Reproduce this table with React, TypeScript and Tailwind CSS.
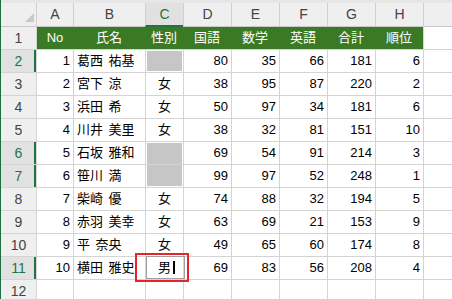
import React from "react";

type Row = {
  no: number;
  name: string;
  sex: string | null;
  d: number;
  e: number;
  f: number;
  g: number;
  h: number;
};

const rows: Row[] = [
  { no: 1, name: "葛西 祐基", sex: null, d: 80, e: 35, f: 66, g: 181, h: 6 },
  { no: 2, name: "宮下 涼", sex: "女", d: 38, e: 95, f: 87, g: 220, h: 2 },
  { no: 3, name: "浜田 希", sex: "女", d: 50, e: 97, f: 34, g: 181, h: 6 },
  { no: 4, name: "川井 美里", sex: "女", d: 38, e: 32, f: 81, g: 151, h: 10 },
  { no: 5, name: "石坂 雅和", sex: null, d: 69, e: 54, f: 91, g: 214, h: 3 },
  { no: 6, name: "笹川 満", sex: null, d: 99, e: 97, f: 52, g: 248, h: 1 },
  { no: 7, name: "柴崎 優", sex: "女", d: 74, e: 88, f: 32, g: 194, h: 5 },
  { no: 8, name: "赤羽 美幸", sex: "女", d: 63, e: 69, f: 21, g: 153, h: 9 },
  { no: 9, name: "平 奈央", sex: "女", d: 49, e: 65, f: 60, g: 174, h: 8 },
  { no: 10, name: "横田 雅史", sex: "男", d: 69, e: 83, f: 56, g: 208, h: 4 },
];

const letters = ["A", "B", "C", "D", "E", "F", "G", "H"];
const headers = ["No", "氏名", "性別", "国語", "数学", "英語", "合計", "順位"];
const selectedRows = [2, 6, 7, 11];

const font = { fontFamily: '"Liberation Sans", "Noto Sans CJK JP", sans-serif' };

export default function App() {
  return (
    <div
      className="relative w-[452px] h-[299px] overflow-hidden bg-white border-l border-[#1f6e43] text-[13px] text-black"
      style={font}
    >
      <div className="h-[3px] bg-[#e6e6e6]" />
      <div className="grid grid-cols-[35px_37px_72px_38px_48px_48px_48px_48px_48px_1fr]">
        {/* Column headers */}
        <div className="relative h-[24px] bg-[#efefef] border-b border-[#c9c9c9]">
          <svg className="absolute left-[24px] top-[10px]" width="9" height="9" viewBox="0 0 9 9">
            <polygon points="9,0 9,9 0,9" fill="#c9c9c9" />
          </svg>
        </div>
        {letters.map((l) => (
          <div
            key={l}
            className={
              l === "C"
                ? "h-[24px] flex items-center justify-center border-l border-[#d0d0d0] border-b-2 border-b-[#217346] bg-[#e1e1e1] text-[#217346] text-[14px]"
                : "h-[24px] flex items-center justify-center border-l border-[#d0d0d0] border-b border-b-[#c9c9c9] bg-[#efefef] text-[#444] text-[14px]"
            }
          >
            {l}
          </div>
        ))}
        <div className="h-[24px] border-l border-[#d0d0d0] border-b border-b-[#c9c9c9] bg-[#efefef]" />

        {/* Row 1 : green header */}
        <div className="h-[22px] flex items-center justify-center bg-[#efefef] text-[#444] text-[14px]">1</div>
        {headers.map((h, i) => (
          <div
            key={h}
            className={
              (i === 0 ? "border-l border-[#d4d4d4] " : "") +
              "h-[22px] flex items-center justify-center bg-[#3b7a24] text-white text-[13px]"
            }
          >
            {h}
          </div>
        ))}
        <div className="h-[22px] border-l border-[#d4d4d4]" />

        {/* Data rows */}
        {rows.map((r, idx) => {
          const rn = idx + 2;
          const sel = selectedRows.includes(rn);
          const cell = "h-[23px] flex items-center border-l border-t border-[#d4d4d4]";
          const num = cell + " justify-end pr-[3px]";
          let cCell: React.ReactNode;
          if (r.sex === null) {
            const isTopOfBlock = rn === 6;
            const isBottomOfBlock = rn === 7;
            cCell = (
              <div
                className={
                  "h-[23px] border-l border-t border-[#d4d4d4] " +
                  (isBottomOfBlock ? "pb-px px-px" : isTopOfBlock ? "pt-px px-px" : "p-px")
                }
              >
                <div className="w-full h-full bg-[#c6c6c6]" />
              </div>
            );
          } else if (rn === 11) {
            cCell = (
              <div className="relative h-[23px] flex items-center justify-center border-l border-t border-[#d4d4d4]">
                <div className="absolute left-0 top-[-1px] w-[39px] h-[23px] border border-[#a0a0a0]" />
                <span className="relative">
                  男
                  <span className="absolute left-full ml-[2px] top-[3px] w-[2px] h-[13px] bg-black" />
                </span>
              </div>
            );
          } else {
            cCell = <div className={cell + " justify-center"}>{r.sex}</div>;
          }
          return (
            <React.Fragment key={rn}>
              <div
                className={
                  "h-[23px] flex items-center justify-center border-t border-[#d4d4d4] text-[14px] " +
                  (sel
                    ? "bg-[#e1e1e1] text-[#217346] shadow-[inset_-2px_0_0_#217346]"
                    : "bg-[#efefef] text-[#444]")
                }
              >
                {rn}
              </div>
              <div className={num}>{r.no}</div>
              <div className={cell + " pl-[3px] whitespace-nowrap [word-spacing:2px]"}>{r.name}</div>
              {cCell}
              <div className={num}>{r.d}</div>
              <div className={num}>{r.e}</div>
              <div className={num}>{r.f}</div>
              <div className={num}>{r.g}</div>
              <div className={num}>{r.h}</div>
              <div className={cell} />
            </React.Fragment>
          );
        })}

        {/* Row 12 */}
        <div className="h-[23px] flex items-center justify-center border-t border-[#d4d4d4] bg-[#efefef] text-[#444] text-[14px]">
          12
        </div>
        {Array.from({ length: 9 }).map((_, i) => (
          <div key={i} className="h-[23px] border-l border-t border-[#d4d4d4]" />
        ))}
      </div>

      {/* Red annotation box */}
      <div className="absolute left-[134px] top-[253px] w-[54px] h-[29px] border-2 border-[#e3262b]" />
    </div>
  );
}
